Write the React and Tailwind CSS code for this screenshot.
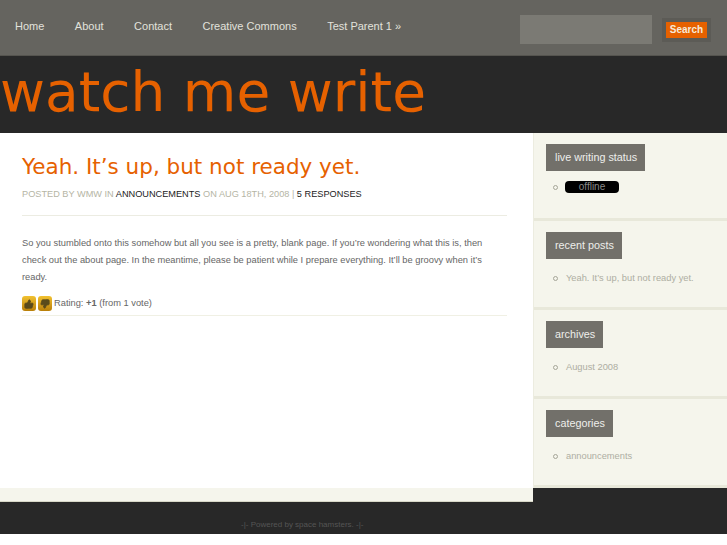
import React from 'react';
import { ThumbsUp, ThumbsDown } from 'lucide-react';

const navItems = ['Home', 'About', 'Contact', 'Creative Commons', 'Test Parent 1 »'];

const widgets = [
    { title: 'recent posts', item: 'Yeah. It’s up, but not ready yet.' },
    { title: 'archives', item: 'August 2008' },
    { title: 'categories', item: 'announcements' },
];

function Widget({ title, children }) {
    return (
        <section className="h-[89px] first:h-[88px] border-b-[3px] border-[#e8e8da] pt-[11px] pl-[12px]">
            <h3 className="inline-block h-[27px] bg-[#72706a] pl-[9px] pr-[8px] text-[10.8px] leading-[26px] text-[#eeeeea]">{title}</h3>
            {children}
        </section>
    );
}

function Bullet() {
    return <span className="w-[5px] h-[5px] rounded-full border border-[#a5a598] shrink-0"></span>;
}

export default function App() {
    return (
        <div className="w-[727px] bg-white font-['Liberation_Sans',Arial,sans-serif]">
            <header className="h-[56px] bg-[#65645f] border-b border-[#55544f] flex items-start">
                <nav className="flex-1 flex items-center gap-[30.5px] pl-[15px] pt-[19px] text-[11px] leading-[14px] text-[#e2e2dc]">
                    {navItems.map((item) => (
                        <a key={item}>{item}</a>
                    ))}
                </nav>
                <div className="w-[132px] h-[29px] mt-[15px] bg-[#7b7a74]"></div>
                <div className="ml-[10px] mr-[16px] mt-[18px] p-[4px] bg-[#5c5b56]">
                    <button className="block w-[41px] h-[16px] bg-[#e66100] text-[10px] font-bold leading-[16px] text-[#f7ead9] text-center">Search</button>
                </div>
            </header>

            <div className="h-[77px] bg-[#282828] font-['DejaVu_Sans',sans-serif] text-[55px] leading-[72px] text-[#e66100]">
                watch me write
            </div>

            <div className="flex items-start bg-[#282828]">
                <main className="w-[533px] h-[369px] flex flex-col">
                    <article className="flex-1 bg-white pl-[22px] pr-[26px] pt-[19px]">
                        <h2 className="font-['DejaVu_Sans',sans-serif] text-[21.5px] leading-[30px] text-[#e66100]">Yeah. It’s up, but not ready yet.</h2>
                        <p className="mt-[5px] text-[9.2px] leading-[14px] text-[#b5b5a5] pb-[14px] border-b border-[#ecece2]">
                            POSTED BY WMW IN <span className="text-[#222]">ANNOUNCEMENTS</span> ON AUG 18TH, 2008 | <span className="text-[#222]">5 RESPONSES</span>
                        </p>
                        <p className="mt-[19px] text-[9.3px] leading-[17px] text-[#666]">
                            So you stumbled onto this somehow but all you see is a pretty, blank page. If you’re wondering what this is, then
                            <br />
                            check out the about page. In the meantime, please be patient while I prepare everything. It’ll be groovy when it’s
                            <br />
                            ready.
                        </p>
                        <div className="mt-[7px] h-[23px] flex items-center gap-[2px] border-b border-[#f0f0e4] text-[9.3px] text-[#666] pb-[1px]">
                            <span className="w-[14px] h-[15px] rounded-[3px] bg-gradient-to-b from-[#f2c230] to-[#b97f08] flex items-center justify-center">
                                <ThumbsUp size={10} className="text-[#5a4a1c] fill-[#5a4a1c]" />
                            </span>
                            <span className="w-[14px] h-[15px] rounded-[3px] bg-gradient-to-b from-[#f2c230] to-[#b97f08] flex items-center justify-center">
                                <ThumbsDown size={10} className="text-[#5a4a1c] fill-[#5a4a1c]" />
                            </span>
                            <span>Rating: <b>+1</b> (from 1 vote)</span>
                        </div>
                    </article>
                    <div className="h-[14px] bg-[#f5f5ec] border-b border-[#d8d8c8]"></div>
                </main>

                <aside className="w-[194px] h-[355px] bg-[#f5f5ec] border-l border-[#ecece0]">
                    <Widget title="live writing status">
                        <div className="mt-[10px] ml-[7px] flex items-center gap-[7px]">
                            <Bullet />
                            <span className="w-[54px] h-[12px] rounded-[4px] bg-black text-center text-[10px] leading-[12px] text-[#888]">offline</span>
                        </div>
                    </Widget>
                    {widgets.map((w) => (
                        <Widget key={w.title} title={w.title}>
                            <div className="mt-[12px] ml-[7px] flex items-center gap-[8px] text-[9.3px] leading-[14px] text-[#aeaea2]">
                                <Bullet />
                                <span>{w.item}</span>
                            </div>
                        </Widget>
                    ))}
                </aside>
            </div>

            <footer className="h-[32px] bg-[#282828] pl-[241px] pt-[17px] text-[8px] leading-[12px] text-[#555]">
                -|- Powered by space hamsters. -|-
            </footer>
        </div>
    );
}
